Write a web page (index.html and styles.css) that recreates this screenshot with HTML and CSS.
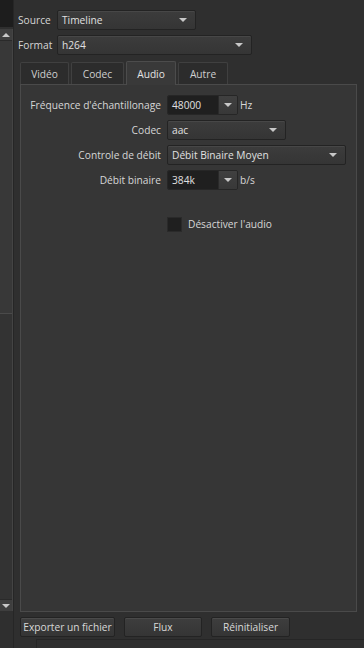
FILE: index.html
```html
<!DOCTYPE html>
<html lang="fr">
<head>
    <meta charset="UTF-8">
    <meta name="viewport" content="width=device-width, initial-scale=1.0">
    <title>Exporter</title>
    <link rel="stylesheet" href="styles.css">
</head>
<body>
    <div class="window">
        <div class="side">
            <div class="side-top"></div>
            <div class="scrollbar">
                <div class="scroll-btn"><span class="arrow-up"></span></div>
                <div class="scroll-handle"></div>
                <div class="scroll-track"></div>
                <div class="scroll-btn"><span class="arrow-down"></span></div>
            </div>
            <div class="side-bottom"></div>
        </div>

        <div class="main">
            <div class="row">
                <span class="label">Source</span>
                <div class="combo combo-source">Timeline<span class="arrow-down"></span></div>
            </div>
            <div class="row">
                <span class="label">Format</span>
                <div class="combo combo-format">h264<span class="arrow-down"></span></div>
            </div>

            <div class="tabs">
                <div class="tab tab-video">Vidéo</div>
                <div class="tab tab-codec">Codec</div>
                <div class="tab tab-audio active">Audio</div>
                <div class="tab tab-autre">Autre</div>
            </div>

            <div class="panel">
                <div class="form">
                    <span class="form-label">Fréquence d'échantillonage</span>
                    <div class="field">
                        <div class="spin"><span class="spin-value">48000</span><span class="spin-btn"><span class="arrow-down"></span></span></div>
                        <span class="unit">Hz</span>
                    </div>

                    <span class="form-label">Codec</span>
                    <div class="field">
                        <div class="combo combo-codec">aac<span class="arrow-down"></span></div>
                    </div>

                    <span class="form-label">Controle de débit</span>
                    <div class="field">
                        <div class="combo combo-rate">Débit Binaire Moyen<span class="arrow-down"></span></div>
                    </div>

                    <span class="form-label">Débit binaire</span>
                    <div class="field">
                        <div class="spin"><span class="spin-value">384k</span><span class="spin-btn"><span class="arrow-down"></span></span></div>
                        <span class="unit">b/s</span>
                    </div>

                    <span class="form-label"></span>
                    <label class="check">
                        <span class="check-box"></span>
                        Désactiver l'audio
                    </label>
                </div>
            </div>

            <div class="buttons">
                <button class="btn btn-export">Exporter un fichier</button>
                <button class="btn btn-flux">Flux</button>
                <button class="btn btn-reset">Réinitialiser</button>
            </div>
            <div class="status"></div>
        </div>
    </div>
</body>
</html>
```

FILE: styles.css
```css
body {
    margin: 0;
    background: #2f2f2f;
    font-family: 'Open Sans', 'Noto Sans', sans-serif;
    font-size: 10.2px;
    color: #d6d6d6;
}
.window {
    display: flex;
    width: 364px;
    height: 648px;
    overflow: hidden;
}

/* left dock with its scrollbar */
.side {
    width: 13px;
    display: flex;
    flex-direction: column;
    border-right: 1px solid #262626;
}
.side-top {
    height: 27px;
    background: #1d1d1d;
}
.scrollbar {
    flex: 1;
    display: flex;
    flex-direction: column;
    background: #353535;
    border-right: 1px solid #444;
    margin-top: 2px;
}
.scroll-btn {
    height: 11px;
    display: flex;
    align-items: center;
    justify-content: center;
    background: #3e3e3e;
    border-bottom: 1px solid #2a2a2a;
}
.scroll-btn:last-child {
    border-top: 1px solid #2a2a2a;
    border-bottom: none;
}
.scroll-handle {
    height: 272px;
    background: #383838;
    border-bottom: 1px solid #4a4a4a;
}
.scroll-track {
    flex: 1;
    background: #333;
}
.side-bottom {
    height: 37px;
}

.arrow-down, .arrow-up {
    display: inline-block;
    width: 0;
    height: 0;
    border-left: 4px solid transparent;
    border-right: 4px solid transparent;
}
.arrow-down {
    border-top: 4px solid #c8c8c8;
}
.arrow-up {
    border-bottom: 4px solid #c8c8c8;
}

/* main area */
.main {
    flex: 1;
    padding: 10px 0 0 4px;
    display: flex;
    flex-direction: column;
}
.row {
    display: flex;
    align-items: center;
    gap: 2px;
    height: 20px;
    margin-bottom: 5px;
}
.label {
    width: 37px;
    white-space: nowrap;
}
.combo {
    box-sizing: border-box;
    height: 20px;
    display: flex;
    align-items: center;
    justify-content: space-between;
    padding: 0 8px 0 4px;
    background: linear-gradient(#3c3c3c, #353535);
    border: 1px solid #232323;
    border-radius: 2px;
    box-shadow: inset 0 1px 0 #474747;
    color: #e0e0e0;
}
.combo-source { width: 139px; }
.combo-format { width: 195px; }
.combo-codec { width: 119px; }
.combo-rate { width: 179px; }

/* tabs */
.tabs {
    display: flex;
    align-items: flex-end;
    gap: 2px;
    height: 23px;
    margin-top: 1px;
    padding-left: 2px;
}
.tab {
    box-sizing: border-box;
    height: 22px;
    display: flex;
    align-items: center;
    justify-content: center;
    background: #2c2c2c;
    border: 1px solid #404040;
    border-bottom: none;
    border-radius: 2px 2px 0 0;
    color: #cfcfcf;
}
.tab-video { width: 49px; }
.tab-codec { width: 53px; }
.tab-audio { width: 50px; }
.tab-autre { width: 50px; }
.tab.active {
    height: 24px;
    background: #393939;
    border-color: #4c4c4c;
    color: #e4e4e4;
    margin-bottom: -1px;
    position: relative;
    z-index: 1;
}

.panel {
    box-sizing: border-box;
    width: 337px;
    height: 528px;
    margin-left: 2px;
    background: #363636;
    border: 1px solid #4a4a4a;
    padding-top: 10px;
}
.form {
    display: grid;
    grid-template-columns: 140px 1fr;
    column-gap: 6px;
    row-gap: 5px;
    align-items: center;
}
.form-label {
    text-align: right;
    white-space: nowrap;
    height: 20px;
    line-height: 20px;
}
.field {
    display: flex;
    align-items: center;
    gap: 2px;
    height: 20px;
}
.spin {
    box-sizing: border-box;
    width: 71px;
    height: 20px;
    display: flex;
    border: 1px solid #262626;
    border-radius: 2px;
    overflow: hidden;
}
.spin-value {
    flex: 1;
    background: #1f1f1f;
    padding-left: 4px;
    line-height: 18px;
    color: #e0e0e0;
}
.spin-btn {
    width: 18px;
    display: flex;
    align-items: center;
    justify-content: center;
    background: linear-gradient(#404040, #383838);
    border-left: 1px solid #2a2a2a;
}
.unit {
    color: #d6d6d6;
}
.check {
    display: flex;
    align-items: center;
    gap: 6px;
    margin-top: 21px;
    height: 16px;
}
.check-box {
    width: 13px;
    height: 13px;
    background: #1f1f1f;
    border: 1px solid #2a2a2a;
}

/* bottom buttons */
.buttons {
    display: flex;
    gap: 9px;
    margin-top: 5px;
    padding-left: 2px;
}
.btn {
    box-sizing: border-box;
    height: 20px;
    padding: 0;
    font-family: inherit;
    font-size: 10.2px;
    white-space: nowrap;
    color: #d8d8d8;
    background: linear-gradient(#3e3e3e, #353535);
    border: 1px solid #232323;
    border-radius: 2px;
    box-shadow: inset 0 1px 0 #4a4a4a;
}
.btn-export { width: 95px; }
.btn-flux { width: 78px; }
.btn-reset { width: 79px; }
.status {
    margin-top: 2px;
    margin-left: 18px;
    flex: 1;
    border-top: 1px solid #262626;
    border-left: 1px solid #262626;
}
```
